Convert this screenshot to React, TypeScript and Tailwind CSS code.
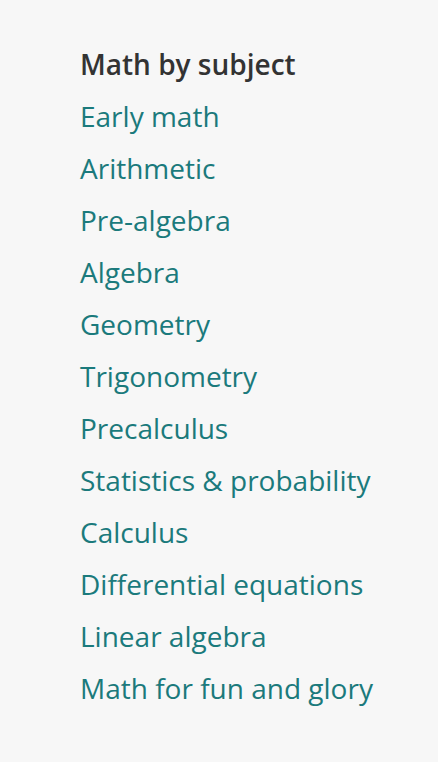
const subjects = [
  "Early math",
  "Arithmetic",
  "Pre-algebra",
  "Algebra",
  "Geometry",
  "Trigonometry",
  "Precalculus",
  "Statistics & probability",
  "Calculus",
  "Differential equations",
  "Linear algebra",
  "Math for fun and glory",
];

export default function App() {
  return (
    <div className="min-h-[762px] w-[438px] bg-[#f7f7f7] pt-[38px] pl-[80px] font-['Open_Sans',sans-serif] [font-variant-ligatures:none]">
      <h2 className="text-[28px] leading-[52px] font-semibold text-[#333333]">
        Math by subject
      </h2>
      <ul className="flex flex-col">
        {subjects.map((s) => (
          <li key={s} className="text-[28px] leading-[52px] text-[#1b7a7c]">
            <a href="#">{s}</a>
          </li>
        ))}
      </ul>
    </div>
  );
}
